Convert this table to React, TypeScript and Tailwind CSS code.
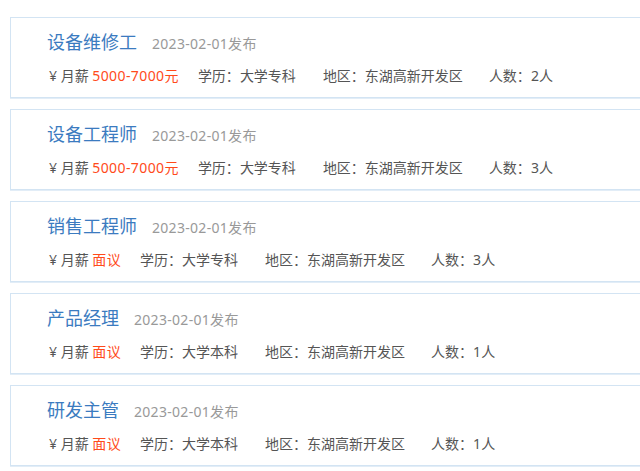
const jobs = [
  { title: '设备维修工', salary: '5000-7000元', edu: '大学专科', count: 2 },
  { title: '设备工程师', salary: '5000-7000元', edu: '大学专科', count: 3 },
  { title: '销售工程师', salary: '面议', edu: '大学专科', count: 3 },
  { title: '产品经理', salary: '面议', edu: '大学本科', count: 1 },
  { title: '研发主管', salary: '面议', edu: '大学本科', count: 1 },
];

export default function App() {
  return (
    <div
      className="w-[640px] h-[471px] overflow-hidden bg-white pt-[17px]"
      style={{ fontFamily: '"Noto Sans", "Noto Sans CJK SC", sans-serif' }}
    >
      {jobs.map((job) => (
        <div
          key={job.title}
          className="ml-[10px] w-[660px] h-[81px] mb-[11px] border border-[#d3e4f3] shadow-[0_1px_0_#e2edf7] pl-[36px] pt-[12px]"
        >
          <div className="flex items-baseline">
            <span className="text-[18px] leading-[24px] text-[#3b7bc0]">{job.title}</span>
            <span className="ml-[15px] text-[14px] tracking-[0.3px] text-[#999]">2023-02-01发布</span>
          </div>
          <div className="mt-[12px] flex text-[14px] leading-[20px] text-[#555]">
            <span className="ml-[2px]">
              ¥ 月薪 <span className="text-[#ff4a1a] tracking-[0.4px]">{job.salary}</span>
            </span>
            <span className="ml-[19px]">学历：{job.edu}</span>
            <span className="ml-[27px]">地区：东湖高新开发区</span>
            <span className="ml-[26px]">人数：{job.count}人</span>
          </div>
        </div>
      ))}
    </div>
  );
}
